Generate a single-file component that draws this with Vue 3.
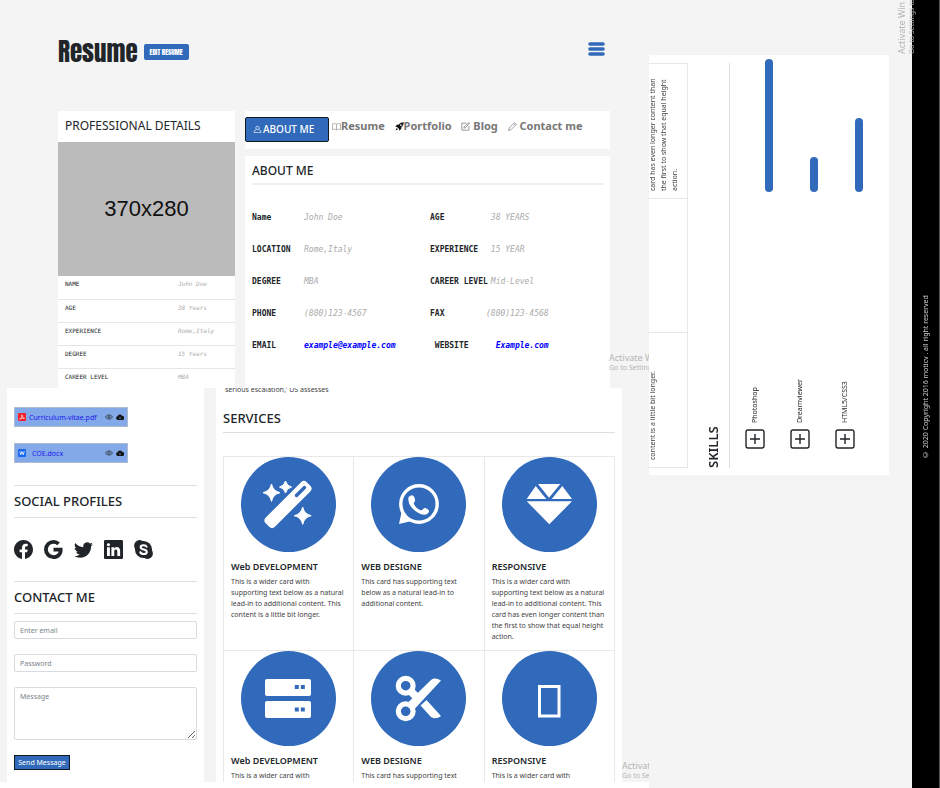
<script setup>
import { ref } from 'vue'

const details = [
  ['NAME', 'John Doe'],
  ['AGE', '38 Years'],
  ['EXPERIENCE', 'Rome,Italy'],
  ['DEGREE', '15 Years'],
  ['CAREER LEVEL', 'MBA'],
]

const about = [
  ['Name', 'John Doe', 'AGE', ' 38 YEARS'],
  ['LOCATION', 'Rome,Italy', 'EXPERIENCE', ' 15 YEAR'],
  ['DEGREE', 'MBA', 'CAREER LEVEL', ' Mid-Level'],
  ['PHONE', '(800)123-4567', 'FAX', '(800)123-4568'],
]

const wide = 'This is a wider card with supporting text below as a natural lead-in to additional content. This'
const services = [
  { icon: 'wand', title: 'Web DEVELOPMENT', text: wide + ' content is a little bit longer.' },
  { icon: 'chat', title: 'WEB DESIGNE', text: 'This card has supporting text below as a natural lead-in to additional content.' },
  { icon: 'gem', title: 'RESPONSIVE', text: wide + ' card has even longer content than the first to show that equal height action.' },
  { icon: 'server', title: 'Web DEVELOPMENT', text: 'This is a wider card with' },
  { icon: 'scissors', title: 'WEB DESIGNE', text: 'This card has supporting text' },
  { icon: 'phone', title: 'RESPONSIVE', text: 'This is a wider card with' },
]

const skills = [
  { name: 'Photoshop', level: 100 },
  { name: 'Dreamviewer', level: 26 },
  { name: 'HTML5/CSS3', level: 56 },
]

const email = ref('')
const password = ref('')
const message = ref('')
</script>

<template>
  <div class="page">
    <div class="left">
      <section class="top">
        <header class="head">
          <h1>Resume</h1>
          <button type="button" class="edit">EDIT RESUME</button>
          <button type="button" class="menu" aria-label="Menu">
            <svg viewBox="0 0 17 14"><path d="M2 2h13M2 7h13M2 12h13" stroke="#316abb" stroke-width="3.6" stroke-linecap="round" /></svg>
          </button>
        </header>
        <div class="columns">
          <aside class="white">
            <h2 class="prof">PROFESSIONAL DETAILS</h2>
            <div class="photo">370x280</div>
            <table class="details">
              <tbody>
                <tr v-for="d in details" :key="d[0]">
                  <th scope="row">{{ d[0] }}</th>
                  <td>{{ d[1] }}</td>
                </tr>
              </tbody>
            </table>
          </aside>
          <div class="content">
            <nav class="nav white">
              <button type="button" class="current">
                <svg viewBox="0 0 16 16" class="ico"><g fill="none" stroke="currentColor" stroke-width="1.2"><circle cx="8" cy="7" r="3" /><path d="M5.5 10 2 12.500V15.400h12v-2.900L10.500 10" /></g></svg>
                ABOUT ME
              </button>
              <a href="#resume">
                <svg viewBox="0 0 16 16" class="ico"><path d="M8 4C6 2.600 3 2.600.8 3.500v10C3 12.600 6 12.600 8 14c2-1.400 5-1.400 7.200-.5v-10C13 2.600 10 2.600 8 4zv10" fill="none" stroke="currentColor" /></svg>Resume
              </a>
              <a href="#portfolio">
                <svg viewBox="0 0 16 16" class="ico dark"><path d="M15.500.5c-4 0-6.500 1.500-8.500 4L3.500 5 .5 8.500l3 .3 3.700 3.700.3 3 3.500-3 .5-3.500c2.500-2 4-4.500 4-8.500zM10.500 4a1.500 1.500 0 1 1 0 3 1.500 1.500 0 0 1 0-3zM3 10.500l2.500 2.500L1 15z" fill-rule="evenodd" fill="currentColor" /></svg>Portfolio
              </a>
              <a href="#blog">
                <svg viewBox="0 0 16 16" class="ico"><path d="M10 2H1.500v12.500H14V7M5 11l1-3 8.500-7L15.500 2 8 10z" fill="none" stroke="currentColor" stroke-width="1.300" /></svg> Blog
              </a>
              <a href="#contact">
                <svg viewBox="0 0 16 16" class="ico"><path d="M1 15l1.500-5L12 1l3 3-9.500 9.500zM10 3l3 3" fill="none" stroke="currentColor" stroke-width="1.200" /></svg> Contact me
              </a>
            </nav>
            <section class="about white">
              <h2>ABOUT ME</h2>
              <hr />
              <dl>
                <template v-for="a in about" :key="a[0]">
                  <dt>{{ a[0] }}</dt><dd>{{ a[1] }}</dd><dt>{{ a[2] }}</dt><dd>{{ a[3] }}</dd>
                </template>
                <dt>EMAIL</dt>
                <dd><a href="mailto:example@example.com">example@example.com</a></dd>
                <dt>{{ ' WEBSITE' }}</dt>
                <dd>{{ '  ' }}<a href="#website">Example.com</a></dd>
              </dl>
            </section>
          </div>
        </div>
        <p class="notice notice-top">Activate W<small>Go to Settings</small></p>
      </section>

      <section class="bottom">
        <aside class="side white">
          <div class="file">
            <svg viewBox="0 0 16 16" class="kind"><rect width="16" height="16" rx="2" fill="#f5222d" /><path d="M3 12.500c3-1 5-5 5-9 0 4 2 6.500 5 7-4-.8-7 0-10 2z" fill="none" stroke="#fff" stroke-width="1.300" /></svg>
            <a href="#cv">Curriculum-vitae.pdf</a>
            <svg viewBox="0 0 16 16" class="act"><path d="M1 8c3-5.500 11-5.500 14 0-3 5.500-11 5.500-14 0z" fill="none" stroke="#222" stroke-width="1.300" /><circle cx="8" cy="8" r="2.300" fill="none" stroke="#222" stroke-width="1.300" /></svg>
            <svg viewBox="0 0 16 16" class="act"><path d="M4 14a3.800 3.800 0 0 1-.8-7.500A5 5 0 0 1 12.700 6 4 4 0 0 1 12.500 14z" fill="#111" /><path d="M8 7v4.500M6 9.800l2 2 2-2" stroke="#83a9e8" fill="none" /></svg>
          </div>
          <div class="file">
            <svg viewBox="0 0 16 16" class="kind"><rect width="16" height="16" rx="2" fill="#1668f5" /><path d="M3.500 4.500l2 7L8 5l2.500 6.500 2-7" fill="none" stroke="#fff" stroke-width="1.600" /></svg>
            <a href="#coe" class="indent">COE.docx</a>
            <svg viewBox="0 0 16 16" class="act"><path d="M1 8c3-5.500 11-5.500 14 0-3 5.500-11 5.500-14 0z" fill="none" stroke="#222" stroke-width="1.300" /><circle cx="8" cy="8" r="2.300" fill="none" stroke="#222" stroke-width="1.300" /></svg>
            <svg viewBox="0 0 16 16" class="act"><path d="M4 14a3.800 3.800 0 0 1-.8-7.500A5 5 0 0 1 12.700 6 4 4 0 0 1 12.500 14z" fill="#111" /><path d="M8 7v4.500M6 9.800l2 2 2-2" stroke="#83a9e8" fill="none" /></svg>
          </div>
          <h2 class="ruled">SOCIAL PROFILES</h2>
          <div class="social">
            <a href="#facebook" aria-label="Facebook"><svg viewBox="0 0 16 16"><path d="M16 8.049c0-4.446-3.582-8.05-8-8.05C3.580 0-.002 3.603-.002 8.050c0 4.017 2.926 7.347 6.750 7.951v-5.625h-2.030V8.050H6.750V6.275c0-2.017 1.195-3.131 3.022-3.131.876 0 1.791.157 1.791.157v1.980h-1.009c-.993 0-1.303.621-1.303 1.258v1.510h2.218l-.354 2.326H9.250V16c3.824-.604 6.750-3.934 6.750-7.951z" /></svg></a>
            <a href="#google" aria-label="Google"><svg viewBox="0 0 16 16"><path d="M15.545 6.558a9.420 9.420 0 0 1 .139 1.626c0 2.434-.87 4.492-2.384 5.885h.002C11.978 15.292 10.158 16 8 16A8 8 0 1 1 8 0a7.689 7.689 0 0 1 5.352 2.082l-2.284 2.284A4.347 4.347 0 0 0 8 3.166c-2.087 0-3.860 1.408-4.492 3.304a4.792 4.792 0 0 0 0 3.063h.003c.635 1.893 2.405 3.301 4.492 3.301 1.078 0 2.004-.276 2.722-.764h-.003a3.702 3.702 0 0 0 1.599-2.431H8v-3.080h7.545z" /></svg></a>
            <a href="#twitter" aria-label="Twitter"><svg viewBox="0 0 16 16"><path d="M5.026 15c6.038 0 9.341-5.003 9.341-9.334 0-.14 0-.282-.006-.422A6.685 6.685 0 0 0 16 3.542a6.658 6.658 0 0 1-1.889.518 3.301 3.301 0 0 0 1.447-1.817 6.533 6.533 0 0 1-2.087.793A3.286 3.286 0 0 0 7.875 6.030a9.325 9.325 0 0 1-6.767-3.429 3.289 3.289 0 0 0 1.018 4.382A3.323 3.323 0 0 1 .64 6.575v.045a3.288 3.288 0 0 0 2.632 3.218 3.203 3.203 0 0 1-.865.115 3.230 3.230 0 0 1-.614-.057 3.283 3.283 0 0 0 3.067 2.277A6.588 6.588 0 0 1 .78 13.580a6.320 6.320 0 0 1-.78-.045A9.344 9.344 0 0 0 5.026 15z" /></svg></a>
            <a href="#linkedin" aria-label="LinkedIn"><svg viewBox="0 0 16 16"><path d="M0 1.146C0 .513.526 0 1.175 0h13.650C15.474 0 16 .513 16 1.146v13.708c0 .633-.526 1.146-1.175 1.146H1.175C.526 16 0 15.487 0 14.854V1.146zm4.943 12.248V6.169H2.542v7.225h2.401zm-1.200-8.212c.837 0 1.358-.554 1.358-1.248-.015-.709-.52-1.248-1.342-1.248-.822 0-1.359.54-1.359 1.248 0 .694.521 1.248 1.327 1.248h.016zm4.908 8.212V9.359c0-.216.016-.432.08-.586.173-.431.568-.878 1.232-.878.869 0 1.216.662 1.216 1.634v3.865h2.401V9.250c0-2.220-1.184-3.252-2.764-3.252-1.274 0-1.845.7-2.165 1.193v.025V6.169h-2.400c.03.678 0 7.225 0 7.225h2.400z" /></svg></a>
            <a href="#skype" aria-label="Skype"><svg viewBox="0 0 16 16"><circle cx="8" cy="8" r="7.200" /><circle cx="4.700" cy="4.700" r="4.600" /><circle cx="11.300" cy="11.300" r="4.600" /><path d="M10.600 5.700C10 4 5.600 3.900 5.600 6.100c0 2.500 5.200 1.300 5.200 3.900 0 2.400-4.900 2.300-5.500.2" fill="none" stroke="#fff" stroke-width="1.700" stroke-linecap="round" /></svg></a>
          </div>
          <h2 class="ruled">CONTACT ME</h2>
          <form @submit.prevent>
            <input v-model="email" type="email" placeholder="Enter email" aria-label="Email" />
            <input v-model="password" type="password" placeholder="Password" aria-label="Password" />
            <textarea v-model="message" placeholder="Message" aria-label="Message"></textarea>
            <button type="submit">Send Message</button>
          </form>
        </aside>

        <main class="main white">
          <div class="news"><p>serious escalation,' US assesses</p></div>
          <h2>SERVICES</h2>
          <hr />
          <div class="cards">
            <article v-for="(s, i) in services" :key="i">
              <div class="disc">
                <svg viewBox="0 0 95 95" fill="#fff">
                  <g v-if="s.icon === 'wand'">
                    <rect x="18" y="41" width="58" height="13" rx="4" transform="rotate(-45 47 47.500)" />
                    <path d="M55.500 38.500l8-8" stroke="#316abb" stroke-width="3.400" stroke-linecap="round" />
                    <path d="M30.500 27q1.500 7 8.500 8.700-7 1.500-8.500 8.700-1.500-7.200-8.500-8.700 7-1.700 8.500-8.700zM44.500 24q1.200 5 6 6-4.800 1.200-6 6-1.200-4.800-6-6 4.800-1 6-6zM61.700 50q1.500 7 8.500 8.700-7 1.500-8.500 8.700-1.500-7.200-8.500-8.700 7-1.700 8.500-8.700z" stroke="#fff" stroke-linejoin="round" />
                  </g>
                  <g v-else-if="s.icon === 'chat'">
                    <circle cx="48" cy="47" r="18.200" fill="none" stroke="#fff" stroke-width="3.400" />
                    <path d="M28 67l2.800-13 10 10zM33 60l4 2-1.500-4z" fill-rule="evenodd" />
                    <path d="M39 39c3-2 4.500 1 5 3.500s-2 3-1 4.700c2 3.600 4 5 6.500 6s2.500-2.700 4.500-2.200 4.500 2 4 3.800c-1.500 4-7 3.500-11 1-5-3-8.500-7-9.300-11s-.4-4.800 1.300-5.800z" />
                  </g>
                  <path v-else-if="s.icon === 'gem'" d="M36 27h22.300L47 40.700zM33.700 29l10.600 13H24.700zM60.300 29 70 42H49.700zM24.700 44.300H70l-22.700 23z" />
                  <g v-else-if="s.icon === 'server'">
                    <rect x="24" y="28" width="46" height="17" rx="2" /><rect x="24" y="50" width="46" height="17" rx="2" />
                    <path d="M53.800 34h4v4h-4zM59.800 34h4v4h-4zM53.800 56.500h4v4h-4zM59.800 56.500h4v4h-4z" fill="#316abb" />
                  </g>
                  <g v-else-if="s.icon === 'scissors'">
                    <circle cx="34.700" cy="34.700" r="7.400" fill="none" stroke="#fff" stroke-width="5.200" />
                    <circle cx="34.700" cy="60.300" r="7.400" fill="none" stroke="#fff" stroke-width="5.200" />
                    <path d="M41 36l8 8-5 6-7-7zM37 51.500l23-22.500q4-3 10 .5L44 57.500zM49.500 54.500l6-5.500L70 65q-5 4-10 1z" />
                  </g>
                  <rect v-else x="37.500" y="35.500" width="19.500" height="29.500" fill="none" stroke="#fff" stroke-width="3" />
                </svg>
              </div>
              <h3>{{ s.title }}</h3>
              <p>{{ s.text }}</p>
            </article>
          </div>
        </main>
        <p class="notice notice-bottom">Activat<small>Go to Se</small></p>
      </section>
    </div>

    <section class="turned">
      <div class="skills white">
        <div class="strip">
          <p>content is a little bit longer.</p>
          <p></p>
          <p>card has even longer content than the first to show that equal height action.</p>
        </div>
        <h2>SKILLS</h2>
        <hr />
        <ul>
          <li v-for="s in skills" :key="s.name">
            <button type="button" :aria-label="'Expand ' + s.name">
              <svg viewBox="0 0 20 20"><rect x="1" y="1" width="18" height="18" rx="2" fill="none" stroke="#212529" stroke-width="1.400" /><path d="M10 5v10M5 10h10" stroke="#212529" stroke-width="1.400" /></svg>
            </button>
            <span>{{ s.name }}</span>
            <div class="track"><div class="bar" :style="{ inlineSize: s.level + '%' }"></div></div>
          </li>
        </ul>
      </div>
      <footer>© 2020 Copyright 2016 moticv . all right reserved</footer>
      <p class="notice notice-turned">Activate Win<small>Go to Settings to</small></p>
    </section>
  </div>
</template>

<style>
body {
  margin: 0;
  background: #fff;
}
</style>

<style scoped>
* {
  box-sizing: border-box;
}
.page {
  display: grid;
  grid-template-columns: minmax(0, 1fr) 291px;
  min-height: 100vh;
  overflow: hidden;
  font-family: "Noto Sans", "Open Sans", sans-serif;
  font-size: 7px;
  color: #212529;
}
h1, h2, h3, p, dl, dd, ul {
  margin: 0;
  padding: 0;
}
h2 {
  font-size: 12px;
  line-height: 16px;
  font-weight: 500;
}
hr {
  margin: 0;
  border: 0;
  border-block-start: 1px solid #dfdfdf;
}
button {
  font-family: inherit;
  padding: 0;
}
a {
  text-decoration: none;
}
svg {
  display: block;
}
.white {
  background: #fff;
}
.left {
  min-width: 0;
}

.top {
  position: relative;
  height: 388px;
  padding: 0 39px 0 58px;
  overflow: hidden;
  background: #f4f4f4;
}
.head {
  display: flex;
  align-items: center;
  gap: 6px;
  height: 111px;
  padding-bottom: 8px;
}
h1 {
  font-family: Anton, "Roboto Condensed", "Liberation Sans Narrow", sans-serif;
  font-size: 25px;
  line-height: 32px;
  font-weight: 400;
}
.edit {
  width: 45px;
  height: 16px;
  border: 0;
  border-radius: 2px;
  background: #316abb;
  color: #fff;
  font-family: Anton, "Roboto Condensed", "Liberation Sans Narrow", sans-serif;
  font-size: 7px;
  font-weight: 400;
  white-space: nowrap;
}
.menu {
  width: 17px;
  margin: 0 5px 6px auto;
  border: 0;
  background: none;
}
.columns {
  display: grid;
  grid-template-columns: 177fr 365fr;
  gap: 10px;
}
.prof {
  height: 31px;
  padding: 7px 7px 6px;
  font-weight: 400;
}
.photo {
  display: grid;
  place-items: center;
  height: 134px;
  background: #bbb;
  color: #111;
  font-family: "Liberation Sans", sans-serif;
  font-size: 22px;
}
.details {
  width: 100%;
  border-collapse: collapse;
  font-family: "DejaVu Sans Mono", monospace;
  font-size: 6px;
}
.details tr {
  height: 23px;
  border-bottom: 1px solid #e6e6e6;
}
.details th,
.details td {
  padding: 4px 0 0 7px;
  vertical-align: top;
  text-align: left;
  font-weight: 400;
}
.details td {
  width: 64px;
  color: #aaa;
  font-style: italic;
}
.content {
  display: flex;
  flex-direction: column;
  gap: 7px;
}
.nav {
  display: flex;
  align-items: flex-start;
  height: 38px;
  padding-top: 6px;
  gap: 7px;
}
.nav a {
  display: flex;
  align-items: center;
  line-height: 18px;
  font-size: 11px;
  font-weight: 700;
  color: #777;
  white-space: pre;
}
.nav .current + a {
  margin-left: -4px;
}
.ico {
  width: 9px;
  height: 9px;
}
.dark {
  color: #111;
}
.current {
  display: flex;
  align-items: center;
  gap: 1px;
  width: 84px;
  height: 25px;
  padding: 0 0 2px 7px;
  border: 1px solid #101820;
  border-radius: 2px;
  background: #316abb;
  color: #fff;
  font-size: 10px;
  font-weight: 500;
}
.about {
  height: 240px;
  padding: 7px 6px 0 7px;
}
.about hr {
  margin-top: 4px;
  border-top: 2px solid #eee;
}
.about dl {
  display: grid;
  grid-template-columns: 52px 126px 56px 1fr;
  grid-auto-rows: 32px;
  align-items: center;
  padding-top: 16px;
  font-family: "DejaVu Sans Mono", monospace;
  font-size: 8px;
  white-space: pre;
}
.about dt {
  font-weight: 700;
}
.about dd {
  color: #aaa;
  font-style: italic;
}
.about dd a {
  color: #00f;
  font-weight: 700;
}

.notice {
  position: absolute;
  color: #b4b4b4;
  font-size: 9px;
  line-height: 11px;
  white-space: nowrap;
}
.notice small {
  display: block;
  font-size: 7px;
  line-height: 9px;
}
.notice-top {
  left: 609px;
  top: 352px;
}
.notice-bottom {
  left: 622px;
  top: 372px;
}

.bottom {
  position: relative;
  display: grid;
  grid-template-columns: 197fr 406fr;
  gap: 12px;
  height: 394px;
  padding: 0 27px 0 7px;
  overflow: hidden;
  background: #f4f4f4;
}
.side {
  padding: 19px 7px 0;
}
.file {
  display: flex;
  align-items: center;
  gap: 3px;
  width: 114px;
  height: 20px;
  margin-bottom: 16px;
  padding: 0 3px;
  border: 1px solid #aebbd0;
  background: #83a9e8;
}
.file a {
  flex: 1;
  color: #1a1af0;
  font-size: 7px;
}
.file .indent {
  padding-left: 3px;
}
.kind {
  width: 8px;
  height: 8px;
}
.act {
  width: 8px;
  height: 8px;
}
.side h2,
.main h2,
.skills h2 {
  font-size: 13px;
}
.side .ruled {
  margin-top: 22px;
  padding: 7px 0 8px;
  border-top: 1px solid #dfdfdf;
  border-bottom: 1px solid #dfdfdf;
}
.social {
  display: flex;
  gap: 11px;
  padding-top: 22px;
}
.social svg {
  width: 19px;
  height: 19px;
  fill: #212529;
}
form {
  display: flex;
  flex-direction: column;
  align-items: flex-start;
  gap: 15px;
  padding-top: 7px;
}
input,
textarea {
  display: block;
  width: 100%;
  height: 18px;
  padding: 0 5px;
  border: 1px solid #d5dbe1;
  border-radius: 2px;
  background: #fff;
  font-family: inherit;
  font-size: 7px;
}
textarea {
  height: 53px;
  padding-top: 4px;
}
input::placeholder,
textarea::placeholder {
  color: #7b848c;
}
form button {
  width: 56px;
  height: 15px;
  border: 1px solid #101820;
  background: #316abb;
  color: #fff;
  font-size: 7px;
  white-space: nowrap;
}
.main {
  padding: 0 7px;
}
.news {
  display: flex;
  align-items: flex-end;
  height: 7px;
  overflow: hidden;
  padding-left: 2px;
  color: #444;
  line-height: 11px;
}
.main h2 {
  padding: 15px 0 6px;
}
.cards {
  display: grid;
  grid-template-columns: repeat(3, 1fr);
  grid-auto-rows: 194px;
  margin-top: 23px;
  border-top: 1px solid #e8e8e8;
  border-left: 1px solid #e8e8e8;
}
.cards article {
  padding: 0 7px;
  border-right: 1px solid #e8e8e8;
  border-bottom: 1px solid #e8e8e8;
}
.disc {
  width: 95px;
  margin: 0 auto;
  border-radius: 50%;
  background: #316abb;
}
.cards h3 {
  margin-top: 9px;
  font-size: 9px;
  line-height: 12px;
  font-weight: 600;
}
.cards p {
  margin-top: 3px;
  line-height: 11px;
  color: #444;
}

/* Turned a quarter to the left: inline runs upwards, blocks stack rightwards. */
.turned {
  position: relative;
  display: flex;
  flex-direction: column;
  height: 100vh;
  writing-mode: vertical-rl;
  transform: rotate(180deg);
  background: #f4f4f4;
}
.skills {
  block-size: 240px;
  margin-inline: 313px 55px;
  padding-inline: 7px 4px;
  overflow: hidden;
}
.strip {
  display: grid;
  grid-template-columns: repeat(3, 1fr);
  block-size: 41px;
  margin-block-start: -2px;
  margin-inline-end: 4px;
  border-inline-start: 1px solid #e8e8e8;
  border-block-end: 1px solid #e8e8e8;
}
.strip p {
  padding-inline: 7px;
  border-inline-end: 1px solid #e8e8e8;
  line-height: 11px;
  color: #444;
}
.skills h2 {
  margin-block: 17px 8px;
  font-weight: 600;
}
.skills hr {
  margin-inline-end: 4px;
}
.skills ul {
  display: flex;
  flex-direction: column;
  gap: 17px;
  margin-block-start: 15px;
  padding-inline-start: 19px;
  list-style: none;
}
.skills li {
  display: grid;
  grid-template-columns: 20px 225px 1fr;
  column-gap: 6px;
  block-size: 28px;
}
.skills li button {
  inline-size: 20px;
  block-size: 20px;
  border: 0;
  background: none;
}
.skills li span {
  line-height: 20px;
}
.track {
  align-self: end;
}
.bar {
  block-size: 8px;
  border-radius: 4px;
  background: #316abb;
}
footer {
  block-size: 28px;
  margin-block-start: 23px;
  padding-inline-start: 329px;
  border-block-end: 1px solid #555;
  background: #000;
  color: #ccc;
  font-size: 7px;
  line-height: 28px;
}
.notice-turned {
  inset-inline-start: 734px;
  inset-block-start: 247px;
}
</style>
